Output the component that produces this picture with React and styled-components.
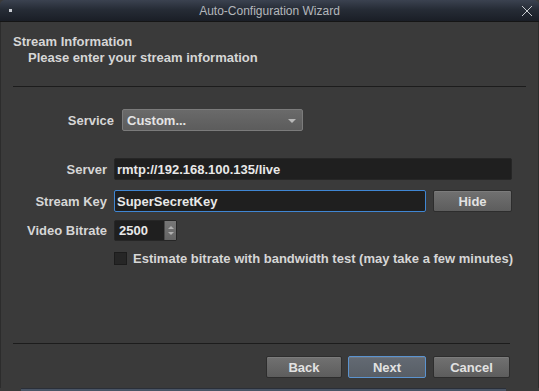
import React, { useState } from "react";
import styled, { createGlobalStyle } from "styled-components";

const Global = createGlobalStyle`
  html, body {
    margin: 0;
    padding: 0;
    background: #3a3a3a;
  }
  * { box-sizing: border-box; }
`;

const Window = styled.div`
  width: 539px;
  height: 391px;
  display: flex;
  flex-direction: column;
  background: #3a3a3a;
  font-family: "Liberation Sans", Arial, sans-serif;
  font-size: 13px;
  font-weight: bold;
  color: #d6d6d6;
  overflow: hidden;
`;

const TitleBar = styled.div`
  height: 22px;
  flex: none;
  display: flex;
  align-items: center;
  padding: 0 6px 0 9px;
  background: linear-gradient(#3b4250, #262c36 45%, #1a1e26);
  border-radius: 5px 5px 0 0;
  border-bottom: 1px solid #151515;
`;

const MenuDot = styled.span`
  width: 3px;
  height: 3px;
  background: #c9ccd2;
`;

const Title = styled.div`
  flex: 1;
  text-align: center;
  font-size: 12px;
  font-weight: normal;
  color: #b4b7bc;
  padding-left: 6px;
`;

const Body = styled.div`
  flex: 1;
  display: flex;
  flex-direction: column;
  padding: 12px 12px 0 12px;
  border-left: 1px solid #2c2c2c;
  border-right: 1px solid #2c2c2c;
`;

const Header = styled.div`
  line-height: 16px;
`;

const Subtitle = styled.div`
  padding-left: 15px;
`;

const Separator = styled.div`
  height: 1px;
  background: #1c1c1c;
  margin-top: ${(p) => p.$top}px;
  margin-right: ${(p) => p.$right}px;
`;

const Row = styled.div`
  display: flex;
  align-items: center;
  margin-top: ${(p) => p.$top}px;
`;

const Label = styled.div`
  width: ${(p) => p.$width}px;
  text-align: right;
  padding-right: ${(p) => p.$gap}px;
  flex: none;
`;

const Combo = styled.div`
  width: 181px;
  height: 22px;
  display: flex;
  align-items: center;
  justify-content: space-between;
  padding: 0 6px 0 4px;
  border: 1px solid #7b7b7b;
  border-radius: 2px;
  background: linear-gradient(#6a6a6a, #5c5c5c);
  color: #e4e4e4;
`;

const Caret = styled.span`
  width: 0;
  height: 0;
  border-left: 4px solid transparent;
  border-right: 4px solid transparent;
  border-top: 4px solid #b8b8b8;
  margin-top: 1px;
`;

const TextField = styled.div`
  width: ${(p) => p.$width}px;
  height: 22px;
  display: flex;
  align-items: center;
  padding: 0 2px;
  background: #1f1f1f;
  border: 1px solid ${(p) => (p.$focus ? "#3f86d3" : "#262626")};
  border-radius: 2px;
  color: #e8e8e8;
`;

const Button = styled.button`
  width: ${(p) => p.$width}px;
  height: 22px;
  margin-left: ${(p) => p.$left || 0}px;
  font-family: inherit;
  font-size: 13px;
  font-weight: bold;
  color: #e2e2e2;
  border: 1px solid ${(p) => (p.$default ? "#5b93cf" : "#2d2d2d")};
  border-radius: 2px;
  background: ${(p) =>
    p.$default
      ? "linear-gradient(#636a73, #585e66)"
      : "linear-gradient(#717171, #5d5d5d)"};
  box-shadow: inset 0 1px 0 rgba(255, 255, 255, 0.08);
  padding: 0;
`;

const Spin = styled.div`
  width: 63px;
  height: 21px;
  display: flex;
  background: #1f1f1f;
  border: 1px solid #262626;
  border-radius: 2px;
  color: #e8e8e8;
`;

const SpinValue = styled.div`
  flex: 1;
  display: flex;
  align-items: center;
  padding-left: 4px;
`;

const SpinArrows = styled.div`
  width: 12px;
  display: flex;
  flex-direction: column;
  align-items: center;
  justify-content: center;
  gap: 3px;
  background: linear-gradient(#777777, #656565);
  border-left: 1px solid #4a4a4a;
`;

const Arrow = styled.span`
  width: 0;
  height: 0;
  border-left: 3px solid transparent;
  border-right: 3px solid transparent;
  ${(p) =>
    p.$up ? "border-bottom: 3px solid #b0b0b0;" : "border-top: 3px solid #b0b0b0;"}
`;

const Check = styled.span`
  width: 13px;
  height: 13px;
  flex: none;
  background: #262626;
  border: 1px solid #1c1c1c;
  margin-right: 6px;
`;

const Spacer = styled.div`
  flex: 1;
`;

const Footer = styled.div`
  display: flex;
  justify-content: flex-end;
  margin: 12px 16px 10px 0;
`;

const BottomStrip = styled.div`
  height: 3px;
  flex: none;
  margin: 0 33px 0 21px;
  background: #4a5566;
  border-top: 1px solid #2a2f38;
`;

export default function App() {
  const [key] = useState("SuperSecretKey");

  return (
    <>
      <Global />
      <Window>
        <TitleBar>
          <MenuDot />
          <Title>Auto-Configuration Wizard</Title>
          <svg width="12" height="12" viewBox="0 0 12 12">
            <path d="M1 1L11 11M11 1L1 11" stroke="#c8cbd0" strokeWidth="1" />
          </svg>
        </TitleBar>
        <Body>
          <Header>
            <div>Stream Information</div>
            <Subtitle>Please enter your stream information</Subtitle>
          </Header>
          <Separator $top={20} $right={0} />
          <Row $top={22}>
            <Label $width={109} $gap={8}>Service</Label>
            <Combo>
              <span>Custom...</span>
              <Caret />
            </Combo>
          </Row>
          <Row $top={27}>
            <Label $width={101} $gap={7}>Server</Label>
            <TextField $width={398}>rmtp://192.168.100.135/live</TextField>
          </Row>
          <Row $top={10}>
            <Label $width={101} $gap={7}>Stream Key</Label>
            <TextField $width={312} $focus>{key}</TextField>
            <Button $width={79} $left={7}>Hide</Button>
          </Row>
          <Row $top={8}>
            <Label $width={101} $gap={7}>Video Bitrate</Label>
            <Spin>
              <SpinValue>2500</SpinValue>
              <SpinArrows>
                <Arrow $up />
                <Arrow />
              </SpinArrows>
            </Spin>
          </Row>
          <Row $top={10}>
            <Label $width={101} $gap={0} />
            <Check />
            <span>Estimate bitrate with bandwidth test (may take a few minutes)</span>
          </Row>
          <Spacer />
          <Separator $top={0} $right={16} />
          <Footer>
            <Button $width={76}>Back</Button>
            <Button $width={78} $left={6} $default>Next</Button>
            <Button $width={77} $left={7}>Cancel</Button>
          </Footer>
        </Body>
        <BottomStrip />
      </Window>
    </>
  );
}
